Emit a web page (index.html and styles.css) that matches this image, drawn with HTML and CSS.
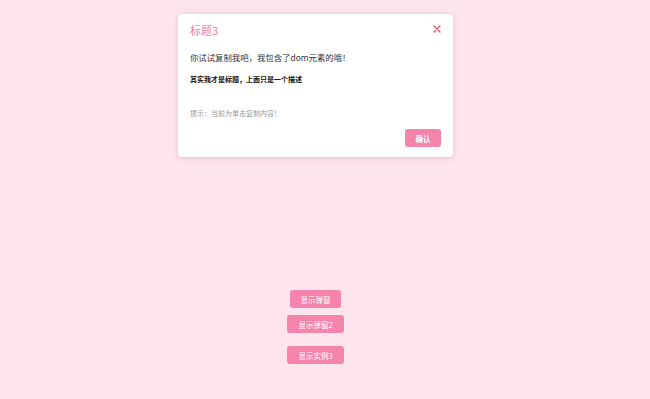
FILE: index.html
```html
<!DOCTYPE html>
<html lang="zh">
<head>
<meta charset="utf-8">
<link rel="stylesheet" href="styles.css">
</head>
<body>
<div class="page">
  <div class="modal">
    <div class="modal-head">
      <span class="modal-title">标题3</span>
      <svg class="modal-close" width="8" height="8" viewBox="0 0 8 8"><path d="M1 1L7 7M7 1L1 7" stroke="#e84a68" stroke-width="1.3" stroke-linecap="round"/></svg>
    </div>
    <p class="line-main">你试试复制我吧，我包含了dom元素的哦！</p>
    <p class="line-bold">其实我才是标题，上面只是一个描述</p>
    <p class="line-hint">提示：当前为单击复制内容！</p>
    <div class="modal-foot"><button class="btn btn-ok">确认</button></div>
  </div>
  <div class="actions">
    <button class="btn btn-a">显示弹窗</button>
    <button class="btn btn-b">显示弹窗2</button>
    <button class="btn btn-c">显示实例3</button>
  </div>
</div>
</body>
</html>
```
FILE: styles.css
```css
html, body {
  margin: 0;
  padding: 0;
  background: #fee4ec;
  font-family: "Noto Sans CJK SC", "Noto Sans", sans-serif;
}
.page {
  width: 631px;
  height: 399px;
  display: flex;
  flex-direction: column;
  align-items: center;
}
.modal {
  margin-top: 14px;
  width: 275px;
  height: 143px;
  box-sizing: border-box;
  background: #fff;
  border-radius: 4px;
  box-shadow: 0 1px 5px rgba(180, 120, 140, 0.35);
  padding: 8px 12px 0 12px;
  display: flex;
  flex-direction: column;
}
.modal-head {
  display: flex;
  justify-content: space-between;
  align-items: center;
  height: 16px;
}
.modal-title {
  color: #f07fa8;
  font-size: 11px;
}
.modal-close {
  display: block;
  margin-right: 0;
  margin-top: -3px;
}
.line-main {
  margin: 13px 0 0 0;
  font-size: 8.4px;
  line-height: 12px;
  color: #333;
}
.line-bold {
  margin: 11px 0 0 0;
  font-size: 7px;
  line-height: 10px;
  font-weight: bold;
  color: #111;
}
.line-hint {
  margin: 24px 0 0 0;
  font-size: 7px;
  line-height: 10px;
  color: #999;
}
.modal-foot {
  display: flex;
  justify-content: flex-end;
  margin-top: 11px;
}
.btn {
  border: none;
  background: #f584ad;
  color: #fff;
  font-family: "Noto Sans CJK SC", "Noto Sans", sans-serif;
  font-size: 7.5px;
  border-radius: 3px;
  padding: 0;
  height: 18px;
}
.btn-ok {
  width: 36px;
  font-weight: bold;
}
.actions {
  margin-top: 133px;
  display: flex;
  flex-direction: column;
  align-items: center;
}
.btn-a { width: 51px; }
.btn-b { width: 57px; margin-top: 7px; }
.btn-c { width: 57px; margin-top: 13px; }
```
